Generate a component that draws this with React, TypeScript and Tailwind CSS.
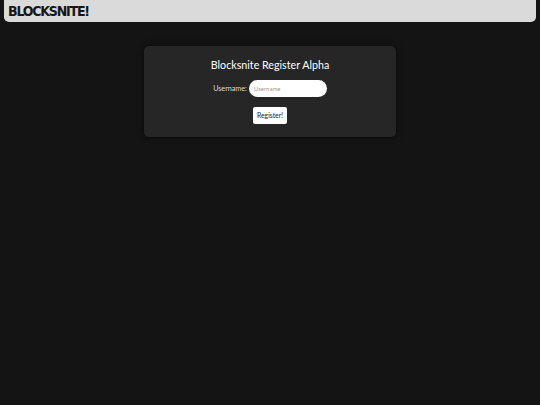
export default function App() {
  return (
    <div className="min-h-[405px] bg-[#141414] font-['Lato',sans-serif] antialiased flex flex-col">
      <header className="mx-1 h-[22px] bg-[#dadada] rounded-b-[5px] flex items-center px-1 shrink-0">
        <h1 className="font-['DejaVu_Sans_Condensed','DejaVu_Sans',sans-serif] font-bold text-[14px] leading-none text-[#161616] tracking-[-1.2px]">BLOCKSNITE!</h1>
      </header>

      <main className="mt-[24px] mx-auto w-[252px] h-[91px] bg-[#262626] rounded-[5px] shadow-[0_0_6px_rgba(0,0,0,0.6)] flex flex-col items-center pt-[11px]">
        <h2 className="text-[10.7px] leading-[15px] text-white">Blocksnite Register Alpha</h2>
        <div className="mt-[8px] flex items-center gap-[2px]">
          <label className="text-[7.2px] text-[#dcdcdc] pt-[2px]">Username:</label>
          <input
            placeholder="Username"
            className="w-[78px] h-[17px] bg-white rounded-full px-[5px] text-[6px] text-black placeholder:text-[#9a9a9a] outline-none"
          />
        </div>
        <button className="mt-[10px] w-[34px] h-[17px] bg-white rounded-[2px] text-[6.8px] text-[#222222]">Register!</button>
      </main>
    </div>
  )
}
